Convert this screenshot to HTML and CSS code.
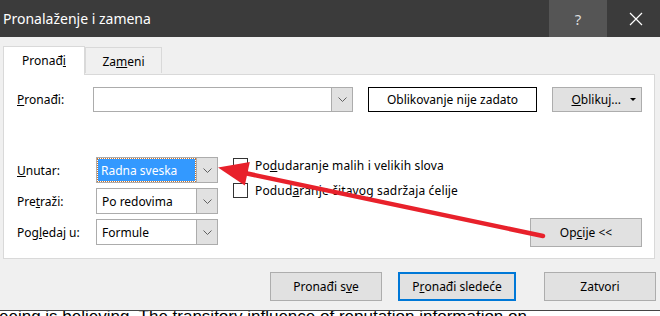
FILE: index.html
```html
<!DOCTYPE html>
<html lang="sr">
<head>
    <meta charset="UTF-8">
    <title>Pronalaženje i zamena</title>
    <link rel="stylesheet" href="styles.css">
</head>
<body>

    <div class="screen">
        <div class="dialog">
            <div class="titlebar">
                <span class="title">Pronalaženje i zamena</span>
                <span class="title-btn help">?</span>
                <span class="title-btn close">
                    <svg width="14" height="14" viewBox="0 0 14 14"><path d="M1 1 L13 13 M13 1 L1 13" stroke="#fff" stroke-width="1.2" fill="none"/></svg>
                </span>
            </div>

            <div class="tabs">
                <div class="tab active">Pronađ<u>i</u></div>
                <div class="tab">Za<u>m</u>eni</div>
            </div>

            <div class="panel">
                <div class="find-row">
                    <label class="lbl find-lbl"><u>P</u>ronađi:</label>
                    <div class="combo find-combo">
                        <div class="combo-text"></div>
                        <div class="combo-btn"><svg width="9" height="5" viewBox="0 0 9 5"><path d="M0.5 0.5 L4.5 4.5 L8.5 0.5" stroke="#606060" fill="none"/></svg></div>
                    </div>
                    <div class="format-box">Oblikovanje nije zadato</div>
                    <div class="btn format-btn"><span><u>O</u>blikuj...</span><span class="tri"></span></div>
                </div>

                <div class="options">
                    <div class="opt-grid">
                        <label class="lbl"><u>U</u>nutar:</label>
                        <div class="combo">
                            <div class="combo-text"><span class="selected">Radna sveska</span></div>
                            <div class="combo-btn"><svg width="9" height="5" viewBox="0 0 9 5"><path d="M0.5 0.5 L4.5 4.5 L8.5 0.5" stroke="#606060" fill="none"/></svg></div>
                        </div>
                        <label class="lbl">Pre<u>t</u>raži:</label>
                        <div class="combo">
                            <div class="combo-text">Po redovima</div>
                            <div class="combo-btn"><svg width="9" height="5" viewBox="0 0 9 5"><path d="M0.5 0.5 L4.5 4.5 L8.5 0.5" stroke="#606060" fill="none"/></svg></div>
                        </div>
                        <label class="lbl">Pog<u>l</u>edaj u:</label>
                        <div class="combo">
                            <div class="combo-text">Formule</div>
                            <div class="combo-btn"><svg width="9" height="5" viewBox="0 0 9 5"><path d="M0.5 0.5 L4.5 4.5 L8.5 0.5" stroke="#606060" fill="none"/></svg></div>
                        </div>
                    </div>

                    <div class="checks">
                        <div class="check"><span class="box"></span>Po<u>d</u>udaranje malih i velikih slova</div>
                        <div class="check"><span class="box"></span>Podud<u>a</u>ranje čitavog sadržaja ćelije</div>
                    </div>

                    <div class="btn options-btn">Op<u>c</u>ije &lt;&lt;</div>
                </div>
            </div>

            <div class="actions">
                <div class="btn action">Pronađi s<u>v</u>e</div>
                <div class="btn action primary">P<u>r</u>onađi sledeće</div>
                <div class="btn action close-btn">Zatvori</div>
            </div>
        </div>

        <div class="doc">
            <span>eeing is believing. The transitory influence of reputation information on</span>
        </div>

        <!-- red annotation arrow drawn over the dialog -->
        <svg class="arrow" width="660" height="316" viewBox="0 0 660 316">
            <line x1="240" y1="172" x2="543" y2="236" stroke="#e8212b" stroke-width="4.5" stroke-linecap="round"/>
            <polygon points="218,167.5 249.8,162 244.8,185.4" fill="#e8212b"/>
        </svg>
    </div>

</body>
</html>
```

FILE: styles.css
```css
* {
    box-sizing: border-box;
}

body {
    margin: 0;
    font-family: "Noto Sans", "Open Sans", sans-serif;
    font-size: 12px;
    color: #000;
    background-color: #fff;
}

.screen {
    position: relative;
    width: 660px;
    height: 316px;
    overflow: hidden;
}

.dialog {
    height: 310px;
    background-color: #f0f0f0;
}

.titlebar {
    display: flex;
    align-items: center;
    height: 37px;
    background-color: #3b3b3b;
    color: #fff;
}

.title {
    flex: 1;
    padding-left: 3px;
    font-size: 14px;
}

.title-btn {
    display: flex;
    align-items: center;
    justify-content: center;
    height: 37px;
    font-size: 15px;
}

.help {
    width: 58px;
    background-color: #555;
    color: #ddd;
}

.close {
    width: 58px;
    margin-right: -5px;
}

.tabs {
    display: flex;
    align-items: flex-end;
    height: 37px;
    padding-left: 3px;
}

.tab {
    width: 77px;
    height: 26px;
    display: flex;
    align-items: center;
    justify-content: center;
    border: 1px solid #d9d9d9;
    border-bottom: none;
    margin-bottom: 1px;
    padding-top: 1px;
}

.tab.active {
    width: 82px;
    height: 29px;
    background-color: #fff;
    margin-bottom: -1px;
    padding-top: 0;
    padding-bottom: 2px;
    position: relative;
    z-index: 1;
}

.panel {
    margin: 0 5px 0 3px;
    height: 185px;
    background-color: #fff;
    border: 1px solid #d9d9d9;
    padding: 12px 0 0 13px;
}

.lbl {
    display: flex;
    align-items: center;
}

.find-row {
    display: flex;
    height: 25px;
}

.find-lbl {
    width: 76px;
}

.combo {
    display: flex;
    height: 26px;
    border: 1px solid #acacac;
    background-color: #fff;
}

.find-combo {
    width: 260px;
    height: 25px;
}

.combo-text {
    flex: 1;
    display: flex;
    align-items: center;
    padding-left: 5px;
}

.combo-btn {
    width: 21px;
    display: flex;
    align-items: center;
    justify-content: center;
    background-color: #e1e1e1;
    border-left: 1px solid #acacac;
}

.selected {
    display: flex;
    align-items: center;
    height: 22px;
    width: 97px;
    margin-left: -4px;
    padding-left: 3px;
    background-color: #3399ff;
    color: #fff;
    outline: 1px dotted #c8732c;
}

.format-box {
    width: 169px;
    margin-left: 15px;
    display: flex;
    align-items: center;
    justify-content: center;
    border: 1px solid #000;
}

.btn {
    display: flex;
    align-items: center;
    justify-content: center;
    background-color: #e1e1e1;
    border: 1px solid #adadad;
}

.format-btn {
    width: 90px;
    margin-left: 15px;
    justify-content: flex-end;
    padding-right: 5px;
}

.tri {
    width: 0;
    height: 0;
    margin-left: 9px;
    border-left: 3px solid transparent;
    border-right: 3px solid transparent;
    border-top: 3px solid #000;
}

.options {
    display: flex;
    margin-top: 45px;
}

.opt-grid {
    display: grid;
    grid-template-columns: 79px 122px;
    grid-auto-rows: 27px;
    row-gap: 4px;
}

.checks {
    display: flex;
    flex-direction: column;
    gap: 10px;
    margin-left: 15px;
    padding-top: 1px;
}

.check {
    display: flex;
    align-items: center;
    height: 15px;
    letter-spacing: 0.15px;
}

.box {
    width: 15px;
    height: 15px;
    border: 1px solid #333;
    background-color: #fff;
    margin-right: 7px;
}

.options-btn {
    width: 112px;
    height: 29px;
    margin-left: auto;
    margin-right: 12px;
    align-self: flex-end;
    margin-bottom: -1px;
}

.actions {
    display: flex;
    padding-left: 270px;
    margin-top: 13px;
}

.action {
    width: 112px;
    height: 29px;
}

.primary {
    width: 118px;
    margin-left: 16px;
    border: 2px solid #0078d7;
}

.close-btn {
    margin-left: 28px;
}

.doc {
    height: 6px;
    overflow: hidden;
    border-top: 1px solid #444;
    background-color: #fff;
    font-family: "Liberation Sans", Arial, sans-serif;
    font-size: 17px;
    line-height: 17px;
    white-space: nowrap;
}

.doc span {
    display: block;
    margin-top: -3px;
    margin-left: -1px;
}

.arrow {
    position: absolute;
    top: 0;
    left: 0;
    pointer-events: none;
}
```
